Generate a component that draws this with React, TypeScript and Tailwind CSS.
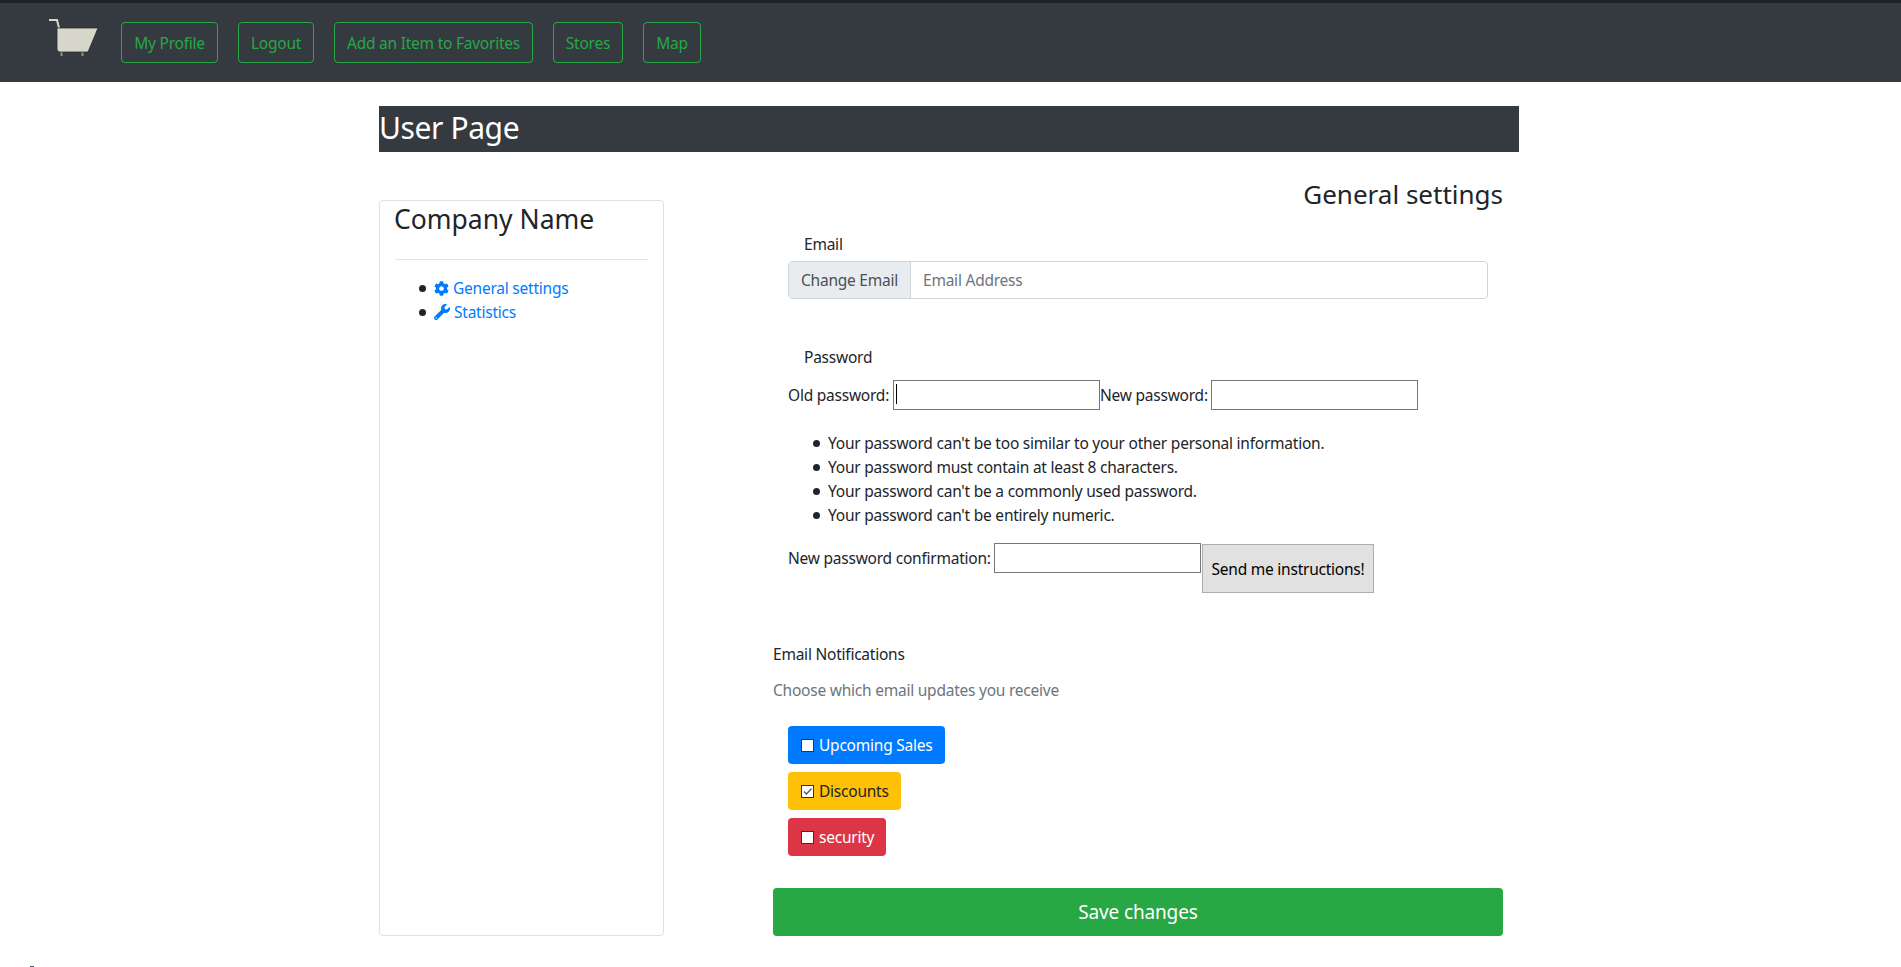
const navLinks = [
  { label: "My Profile", width: "w-[97px]" },
  { label: "Logout", width: "w-[76px]" },
  { label: "Add an Item to Favorites", width: "w-[199px]" },
  { label: "Stores", width: "w-[70px]" },
  { label: "Map", width: "w-[58px]" },
];

const passwordRules = [
  "Your password can't be too similar to your other personal information.",
  "Your password must contain at least 8 characters.",
  "Your password can't be a commonly used password.",
  "Your password can't be entirely numeric.",
];

function CartLogo() {
  return (
    <svg width="52" height="40" viewBox="0 0 52 40" className="mt-[-9px] shrink-0">
      <path d="M1 2 H9 L11 10" fill="none" stroke="#d6d7ca" strokeWidth="2" />
      <rect x="12.5" y="34" width="2" height="4" fill="#8f9088" />
      <rect x="33.5" y="34" width="2" height="4" fill="#8f9088" />
      <path d="M9 10 H50 L40 34 H12 Q9 34 9 31 Z" fill="#d6d7ca" stroke="#23272b" strokeWidth="0.75" />
    </svg>
  );
}

function GearIcon() {
  return (
    <svg width="15" height="15" viewBox="0 0 512 512" fill="#007bff" className="shrink-0">
      <path d="M487.4 315.7l-42.6-24.6c4.3-23.2 4.3-47 0-70.2l42.6-24.6c4.9-2.8 7.1-8.6 5.5-14-11.1-35.6-30-67.8-54.7-94.6-3.8-4.1-10-5.1-14.8-2.3L380.8 110c-17.9-15.4-38.5-27.3-60.8-35.1V25.8c0-5.6-3.9-10.5-9.4-11.7-36.7-8.2-74.3-7.8-109.2 0-5.5 1.2-9.4 6.1-9.4 11.7V75c-22.2 7.9-42.8 19.8-60.8 35.1L88.7 85.5c-4.9-2.8-11-1.9-14.8 2.3-24.7 26.7-43.6 58.9-54.7 94.6-1.7 5.4.6 11.2 5.5 14L67.3 221c-4.3 23.2-4.3 47 0 70.2l-42.6 24.6c-4.9 2.8-7.1 8.6-5.5 14 11.1 35.6 30 67.8 54.7 94.6 3.8 4.1 10 5.1 14.8 2.3l42.6-24.6c17.9 15.4 38.5 27.3 60.8 35.1v49.2c0 5.6 3.9 10.5 9.4 11.7 36.7 8.2 74.3 7.8 109.2 0 5.5-1.2 9.4-6.1 9.4-11.7v-49.2c22.2-7.9 42.8-19.8 60.8-35.1l42.6 24.6c4.9 2.8 11 1.9 14.8-2.3 24.7-26.7 43.6-58.9 54.7-94.6 1.5-5.5-.7-11.3-5.6-14.1zM256 336c-44.1 0-80-35.9-80-80s35.9-80 80-80 80 35.9 80 80-35.9 80-80 80z" />
    </svg>
  );
}

function WrenchIcon() {
  return (
    <svg width="16" height="16" viewBox="0 0 512 512" fill="#007bff" className="shrink-0">
      <path d="M507.73 109.1c-2.24-9.03-13.54-12.09-20.12-5.51l-74.36 74.36-67.88-11.31-11.31-67.88 74.36-74.36c6.62-6.62 3.43-17.9-5.66-20.16-47.38-11.74-99.55.91-136.58 37.93-39.64 39.64-50.55 97.1-34.05 147.2L18.74 402.76c-24.99 24.99-24.99 65.51 0 90.5 24.99 24.99 65.51 24.99 90.5 0l213.21-213.21c50.12 16.71 107.47 5.68 147.37-34.22 37.07-37.07 49.7-89.32 37.91-136.73zM64 472c-13.25 0-24-10.75-24-24 0-13.26 10.75-24 24-24s24 10.74 24 24c0 13.25-10.75 24-24 24z" />
    </svg>
  );
}

function Bullet() {
  return <span className="h-[7px] w-[7px] shrink-0 rounded-full bg-[#212529]" />;
}

function NotifyBadge({ label, color, checked }: { label: string; color: string; checked?: boolean }) {
  return (
    <label className={`flex h-[38px] items-center gap-[5px] rounded-[4px] pl-[13px] ${color}`}>
      <span className="relative flex h-[13px] w-[13px] shrink-0">
        <input
          type="checkbox"
          defaultChecked={checked}
          className="m-0 h-[13px] w-[13px] appearance-none border border-[#333333] bg-white"
        />
        {checked && (
          <svg width="13" height="13" viewBox="0 0 13 13" className="absolute inset-0">
            <path d="M3 6.5 L5.5 9 L10.5 3.5" fill="none" stroke="#555555" strokeWidth="1.3" />
          </svg>
        )}
      </span>
      <span>{label}</span>
    </label>
  );
}

export default function App() {
  return (
    <div className="min-h-[967px] bg-white font-['Noto_Sans','Open_Sans',sans-serif] text-[15.5px] leading-6 tracking-[-0.23px] text-[#212529]">
      <div className="h-[3px] bg-[#1f2225]" />
      <nav className="flex h-[79px] items-center bg-[#343a40] pl-[48px]">
        <CartLogo />
        <div className="ml-[21px] flex gap-5">
          {navLinks.map((link) => (
            <button
              key={link.label}
              className={`h-[41px] rounded-[4px] border border-[#28a745] text-[#28a745] ${link.width}`}
            >
              {link.label}
            </button>
          ))}
        </div>
      </nav>

      <div className="ml-[379px] mt-6 w-[1140px]">
        <h2 className="h-[46px] bg-[#343a40] text-[30px] leading-[44px] tracking-[-0.4px] text-white">User Page</h2>

        <div className="mt-[48px] flex">
          <aside className="h-[736px] w-[285px] rounded-[4px] border border-[#dfdfdf] px-[15px]">
            <h3 className="ml-[-1px] text-[26.5px] leading-[36px] tracking-normal">Company Name</h3>
            <hr className="mt-[22px] border-[#e3e3e3]" />
            <ul className="mt-[16px] pl-[24px]">
              <li className="flex h-6 items-center text-[#007bff]">
                <Bullet />
                <span className="ml-[8px] flex w-[19px]">
                  <GearIcon />
                </span>
                <a>General settings</a>
              </li>
              <li className="flex h-6 items-center text-[#007bff]">
                <Bullet />
                <span className="ml-[8px] flex w-[20px]">
                  <WrenchIcon />
                </span>
                <a>Statistics</a>
              </li>
            </ul>
          </aside>

          <main className="flex-1 pl-[109px] pr-4">
            <h4 className="mt-[-21px] h-[30px] text-right text-[26px] leading-[30px] tracking-normal">General settings</h4>

            <div className="mt-[23px] pl-[15px]">
              <div className="pl-[16px]">Email</div>
              <div className="mt-[5px] flex h-[38px] w-[700px] rounded-[4px] border border-[#ced4da]">
                <span className="flex items-center border-r border-[#ced4da] bg-[#e9ecef] px-3 text-[#495057]">
                  Change Email
                </span>
                <input
                  placeholder="Email Address"
                  className="min-w-0 flex-1 px-3 outline-none placeholder:text-[#6c757d]"
                />
              </div>

              <div className="mt-[46px] pl-[16px]">Password</div>
              <div className="mt-[11px] flex h-[30px] items-center">
                <span className="w-[105px]">Old password:</span>
                <span className="relative flex">
                  <input className="h-[30px] w-[207px] border border-[#767676]" />
                  <span className="absolute left-[3px] top-[4px] h-[20px] w-px bg-black" />
                </span>
                <span className="w-[111px]">New password:</span>
                <input className="h-[30px] w-[207px] border border-[#767676]" />
              </div>

              <ul className="mt-[21px] pl-[25px]">
                {passwordRules.map((rule) => (
                  <li key={rule} className="flex h-6 items-center gap-[8px]">
                    <Bullet />
                    {rule}
                  </li>
                ))}
              </ul>

              <div className="mt-[16px] flex items-start">
                <span className="mt-[3px] w-[206px]">New password confirmation:</span>
                <input className="h-[30px] w-[207px] border border-[#767676]" />
                <button className="ml-px mt-px h-[49px] w-[172px] border border-[#adadad] bg-[#e1e1e1] text-black">
                  Send me instructions!
                </button>
              </div>
            </div>

            <div className="mt-[49px]">Email Notifications</div>
            <div className="mt-3 text-[#6c757d]">Choose which email updates you receive</div>

            <div className="mt-[24px] flex flex-col gap-2 pl-[15px]">
              <NotifyBadge label="Upcoming Sales" color="w-[157px] bg-[#007bff] text-white" />
              <NotifyBadge label="Discounts" color="w-[113px] bg-[#ffc107] text-[#212529]" checked />
              <NotifyBadge label="security" color="w-[98px] bg-[#dc3545] text-white" />
            </div>

            <button className="mt-8 h-[48px] w-full rounded-[4px] bg-[#28a745] text-[19px] tracking-[-0.15px] text-white">
              Save changes
            </button>
          </main>
        </div>
      </div>

      <div className="ml-[30px] mt-[30px] h-px w-[4px] bg-[#4a5a80]" />
    </div>
  );
}
